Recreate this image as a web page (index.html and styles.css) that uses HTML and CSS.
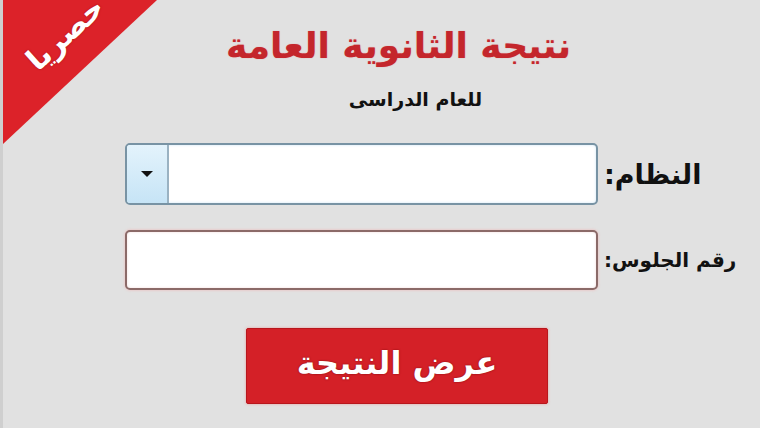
FILE: index.html
```html
<!DOCTYPE html>
<html lang="ar">
<head>
<meta charset="utf-8">
<link rel="stylesheet" href="styles.css">
</head>
<body>
<div class="page">
  <div class="ribbon"><span class="ribbon-text">حصريا</span></div>
  <header class="header">
    <h1 class="title">نتيجة الثانوية العامة</h1>
    <p class="subtitle">للعام الدراسى</p>
  </header>
  <form class="form">
    <label class="label label-big">النظام:</label>
    <div class="select">
      <div class="select-value"></div>
      <div class="select-btn"><span class="caret"></span></div>
    </div>
    <label class="label label-small">رقم الجلوس:</label>
    <div class="input"></div>
  </form>
  <div class="actions">
    <button type="button" class="submit">عرض النتيجة</button>
  </div>
</div>
</body>
</html>
```
FILE: styles.css
```css
* { box-sizing: border-box; }
html, body { margin: 0; padding: 0; }
body {
  width: 760px;
  height: 428px;
  overflow: hidden;
  background: #e1e1e1;
  font-family: "DejaVu Sans", sans-serif;
}
.page {
  position: relative;
  width: 760px;
  height: 428px;
  padding-top: 20px;
  border-left: 3px solid #cfcfcf;
}
.ribbon {
  position: absolute;
  left: 0;
  top: 0;
  width: 154px;
  height: 144px;
  background: #dc2229;
  clip-path: polygon(0 0, 100% 0, 0 100%);
  overflow: hidden;
}
.ribbon-text {
  position: absolute;
  left: -8px;
  top: 16px;
  width: 140px;
  text-align: center;
  color: #fff;
  font-weight: bold;
  font-size: 30px;
  transform: rotate(-42deg);
  direction: rtl;
  text-shadow: 0 0 2px #a01015;
}
.header {
  text-align: center;
  direction: rtl;
}
.title {
  margin: 0;
  font-size: 36px;
  font-weight: bold;
  color: #c4262c;
  line-height: 52px;
  padding-left: 34px;
  text-shadow: 0 0 1px #e08080;
}
.subtitle {
  margin: 14px 0 0;
  font-size: 19px;
  font-weight: bold;
  color: #111;
  line-height: 26px;
  padding-left: 68px;
}
.form {
  direction: rtl;
  margin: 31px 0 0 122px;
  width: 615px;
  display: grid;
  grid-template-columns: 142px 473px;
  row-gap: 25px;
  align-items: center;
}
.label {
  font-weight: bold;
  color: #111;
  text-align: left;
  padding-left: 6px;
  white-space: nowrap;
}
.label-big { font-size: 27px; }
.label-small { font-size: 20px; }
.select {
  height: 62px;
  border: 2px solid #7893a4;
  border-radius: 5px;
  display: flex;
  direction: rtl;
  background: #fff;
  overflow: hidden;
  box-shadow: inset 0 0 3px #cfe6f5;
}
.select-value { flex: 1; }
.select-btn {
  width: 42px;
  border-right: 2px solid #9ab2c2;
  background: linear-gradient(#e3f3fc, #c6e4f6);
  display: flex;
  align-items: center;
  justify-content: center;
}
.caret {
  width: 0;
  height: 0;
  border-left: 6px solid transparent;
  border-right: 6px solid transparent;
  border-top: 6px solid #111;
}
.input {
  height: 60px;
  border: 2px solid #8b6a68;
  border-radius: 5px;
  background: #fff;
  box-shadow: 0 0 3px #f0b8b8, inset 0 0 3px #f3dede;
}
.actions {
  margin-top: 38px;
  padding-left: 243px;
}
.submit {
  width: 302px;
  height: 76px;
  background: #d42027;
  border: 1px solid #b8161c;
  border-radius: 2px;
  color: #fff;
  font-family: "DejaVu Sans", sans-serif;
  font-weight: bold;
  font-size: 32px;
  direction: rtl;
  padding: 0 0 6px;
  text-shadow: 0 0 2px #7a0a0e;
  box-shadow: 0 0 3px #e8a0a0;
}
```
